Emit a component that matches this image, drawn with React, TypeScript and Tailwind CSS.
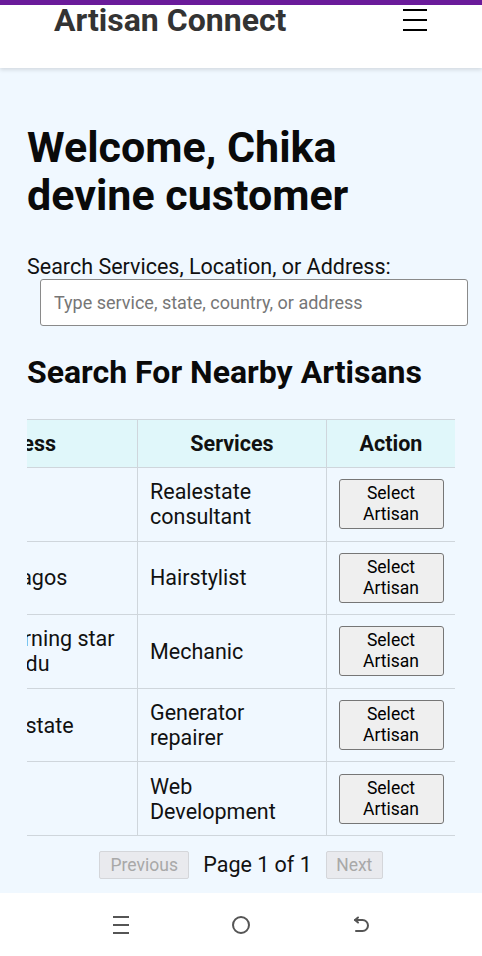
import React from "react";

const rows = [
  { addr: "Abuja", service: "Realestate consultant" },
  { addr: "Ikeja GRA, Lagos", service: "Hairstylist" },
  { addr: "No. 14B, Morning star Avenue, Ogudu", service: "Mechanic" },
  { addr: "Ikeja, Lagos state", service: "Generator repairer" },
  { addr: "Kano", service: "Web Development" },
];

function Hamburger() {
  return (
    <div className="flex flex-col gap-[8px] w-[24px] mt-[4px]">
      <div className="h-[2px] bg-black" />
      <div className="h-[2px] bg-black" />
      <div className="h-[2px] bg-black" />
    </div>
  );
}

export default function App() {
  return (
    <div className="w-[482px] h-[956px] bg-[#f0f8ff] flex flex-col overflow-hidden font-['Roboto',sans-serif] text-[#111]">
      <header className="h-[68px] shrink-0 bg-white border-t-[5px] border-[#6a1b9a] shadow-[0_2px_4px_rgba(0,0,0,0.12)] flex justify-between items-start pl-[54px] pr-[55px] relative z-10">
        <div className="text-[32px] leading-[32px] font-bold text-[#333] -mt-[1px]">Artisan Connect</div>
        <Hamburger />
      </header>

      <main className="flex-1 px-[27px] flex flex-col">
        <h1 className="mt-[55px] text-[43px] leading-[48px] font-bold text-[#0a0a0a]">
          Welcome, Chika
          <br />
          devine customer
        </h1>

        <label className="mt-[35px] text-[21.5px] leading-[25px] text-[#111] whitespace-nowrap">
          Search Services, Location, or Address:
        </label>
        <input
          className="ml-[13px] w-[428px] h-[47px] shrink-0 bg-white border border-[#8a8a8a] rounded-[3px] px-[13px] text-[18px] placeholder:text-[#767676] outline-none"
          placeholder="Type service, state, country, or address"
        />

        <h2 className="mt-[27px] text-[32px] leading-[38px] font-bold text-[#0a0a0a]">
          Search For Nearby Artisans
        </h2>

        <div className="mt-[28px] w-[428px] overflow-hidden">
          <table className="-ml-[133px] w-[561px] table-fixed border-collapse text-[21.5px] leading-[25px]">
            <colgroup>
              <col className="w-[243px]" />
              <col className="w-[189px]" />
              <col className="w-[129px]" />
            </colgroup>
            <thead>
              <tr className="h-[48px] bg-[#e0f7fa]">
                <th className="border border-[#cfd6dc] font-bold text-center">Address</th>
                <th className="border border-[#cfd6dc] font-bold text-center">Services</th>
                <th className="border border-[#cfd6dc] font-bold text-center">Action</th>
              </tr>
            </thead>
            <tbody>
              {rows.map((r, i) => (
                <tr key={i}>
                  <td className="border border-[#cfd6dc] px-[12px] py-[11.3px] align-middle text-left">{r.addr}</td>
                  <td className="border border-[#cfd6dc] px-[12px] py-[11.3px] align-middle text-left">{r.service}</td>
                  <td className="border border-[#cfd6dc] px-[11px] py-[11.3px] align-middle text-center">
                    <button className="w-[105px] h-[50px] bg-[#efefef] border border-[#767676] rounded-[3px] text-[17.5px] leading-[21px] text-black">
                      Select
                      <br />
                      Artisan
                    </button>
                  </td>
                </tr>
              ))}
            </tbody>
          </table>
        </div>

        <div className="mt-[15px] flex justify-center items-center -ml-[27px] -mr-[27px]">
          <button className="w-[90px] h-[28px] bg-[#e9eaee] border border-[#d4d6da] rounded-[2px] text-[17.5px] leading-[20px] text-[#a8a8a8]">
            Previous
          </button>
          <span className="mx-[14px] text-[21.5px] leading-[26px] text-[#111]">Page 1 of 1</span>
          <button className="w-[57px] h-[28px] bg-[#e9eaee] border border-[#d4d6da] rounded-[2px] text-[17.5px] leading-[20px] text-[#a8a8a8]">
            Next
          </button>
        </div>
      </main>

      <nav className="h-[63px] shrink-0 bg-white flex justify-center items-center gap-[100px]">
        <div className="w-[20px] flex justify-center">
          <div className="flex flex-col gap-[6px] w-[16px]">
            <div className="h-[2px] bg-[#555]" />
            <div className="h-[2px] bg-[#555]" />
            <div className="h-[2px] bg-[#555]" />
          </div>
        </div>
        <div className="w-[20px] flex justify-center">
          <div className="w-[18px] h-[18px] rounded-full border-[2px] border-[#555]" />
        </div>
        <div className="w-[20px] flex justify-center">
          <svg width="18" height="18" viewBox="0 0 18 18" fill="none" stroke="#555" strokeWidth="2" strokeLinecap="round" strokeLinejoin="round">
            <path d="M3 4 H10.5 A5.5 5.5 0 0 1 10.5 15 H4" />
            <path d="M6 1.5 L3 4 L6 6.5" />
          </svg>
        </div>
      </nav>
    </div>
  );
}
